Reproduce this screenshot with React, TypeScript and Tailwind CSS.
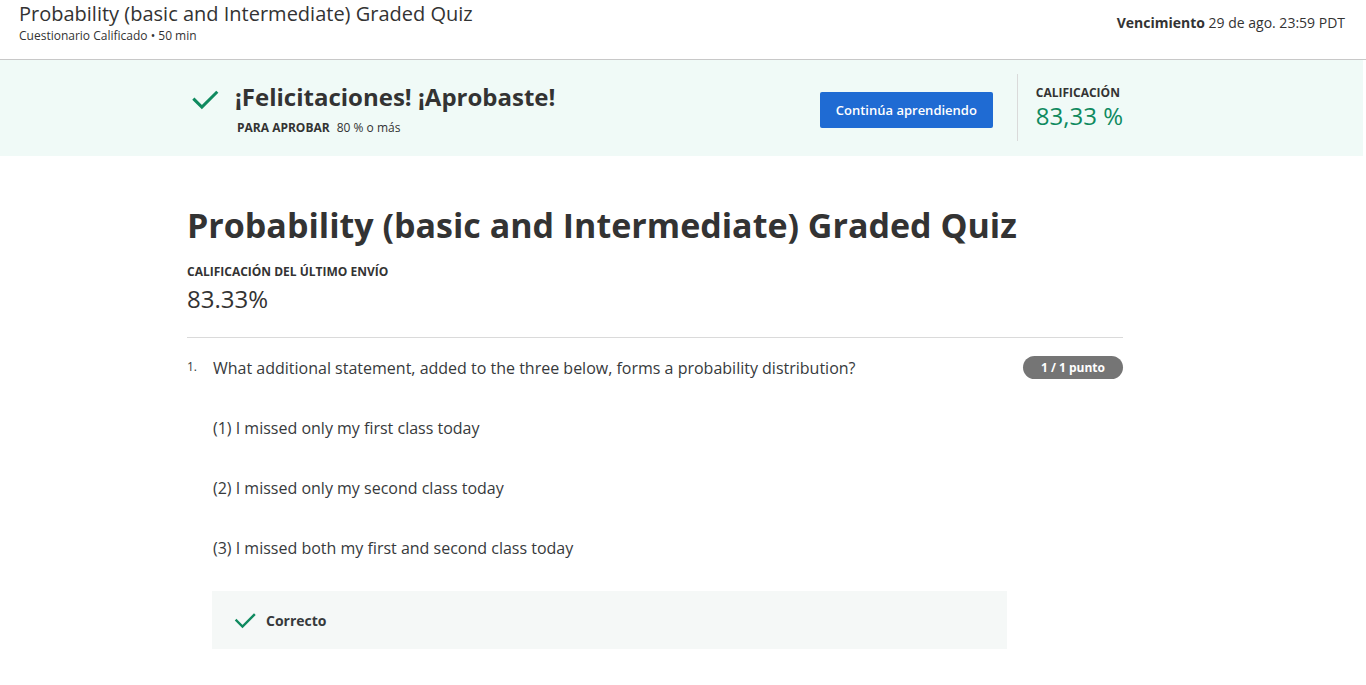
import React from 'react';

const options = [
  '(1) I missed only my first class today',
  '(2) I missed only my second class today',
  '(3) I missed both my first and second class today',
];

function Check({ className }: { className?: string }) {
  return (
    <svg viewBox="0 0 24 24" className={className} fill="none" stroke="currentColor" strokeWidth={2.4} strokeLinecap="square">
      <path d="M3.5 12.5l6 6L21 7" />
    </svg>
  );
}

export default function App() {
  return (
    <div className="min-h-screen bg-white text-[#373a3c]" style={{ fontFamily: '"Open Sans", "Liberation Sans", sans-serif' }}>
      <header className="flex justify-between h-[60px] border-b border-[#c8c8c8] pl-[19px] pr-[21px]">
        <div className="pt-[1px]">
          <h1 className="text-[20px] leading-[26px] text-[#333]">Probability (basic and Intermediate) Graded Quiz</h1>
          <p className="text-[12px] leading-[16px] text-[#333] mt-[1px]">Cuestionario Calificado • 50 min</p>
        </div>
        <div className="text-[14px] pt-[12px] text-[#333]">
          <span className="font-bold">Vencimiento</span> 29 de ago. 23:59 PDT
        </div>
      </header>

      <section className="bg-[#f0faf7] h-[96px] mr-[3px]">
        <div className="ml-[190px] flex items-start w-[933px]">
          <Check className="w-[30px] h-[30px] text-[#0f8a5f] mt-[24px]" />
          <div className="ml-[15px] mt-[21px]">
            <h2 className="text-[24px] font-bold leading-[32px] text-[#333]">¡Felicitaciones! ¡Aprobaste!</h2>
            <p className="text-[12px] leading-[16px] mt-[7px] ml-[2px] text-[#333]">
              <span className="font-bold">PARA APROBAR</span>
              <span className="ml-[7px]">80 % o más</span>
            </p>
          </div>
          <button className="ml-auto mt-[32px] h-[36px] w-[173px] rounded-[2px] bg-[#1f6bd3] text-white text-[13px] font-semibold pt-[1px]">
            Continúa aprendiendo
          </button>
          <div className="ml-[24px] mt-[14px] h-[67px] border-l border-[#dadada]" />
          <div className="ml-[18px] mt-[25px] whitespace-nowrap">
            <p className="text-[12px] font-bold leading-[16px] text-[#333]">CALIFICACIÓN</p>
            <p className="text-[24px] leading-[30px] text-[#0f8a5f]">83,33 %</p>
          </div>
        </div>
      </section>

      <main className="ml-[187px] w-[936px]">
        <h1 className="mt-[47px] text-[34px] font-bold leading-[44px] text-[#333]">Probability (basic and Intermediate) Graded Quiz</h1>
        <p className="mt-[17px] text-[12px] font-bold leading-[16px] text-[#333]">CALIFICACIÓN DEL ÚLTIMO ENVÍO</p>
        <p className="mt-[4px] text-[24px] leading-[30px] text-[#333]">83.33%</p>
        <div className="mt-[23px] border-t border-[#dadada]" />

        <div className="mt-[18px] flex items-start">
          <span className="w-[26px] text-[12px] leading-[22px]">1.</span>
          <p className="flex-1 text-[16px] leading-[24px]">What additional statement, added to the three below, forms a probability distribution?</p>
          <span className="h-[23px] w-[100px] rounded-full bg-[#757575] text-white text-[12px] font-bold flex items-center justify-center">1 / 1 punto</span>
        </div>

        <div className="ml-[26px]">
          {options.map((o) => (
            <p key={o} className="mt-[36px] text-[16px] leading-[24px]">{o}</p>
          ))}
          <div className="mt-[31px] -ml-[1px] w-[795px] h-[58px] bg-[#f5f8f7] flex items-center pl-[21px]">
            <Check className="w-[24px] h-[24px] text-[#0f8a5f]" />
            <span className="ml-[9px] text-[14px] font-bold">Correcto</span>
          </div>
        </div>
      </main>
    </div>
  );
}
